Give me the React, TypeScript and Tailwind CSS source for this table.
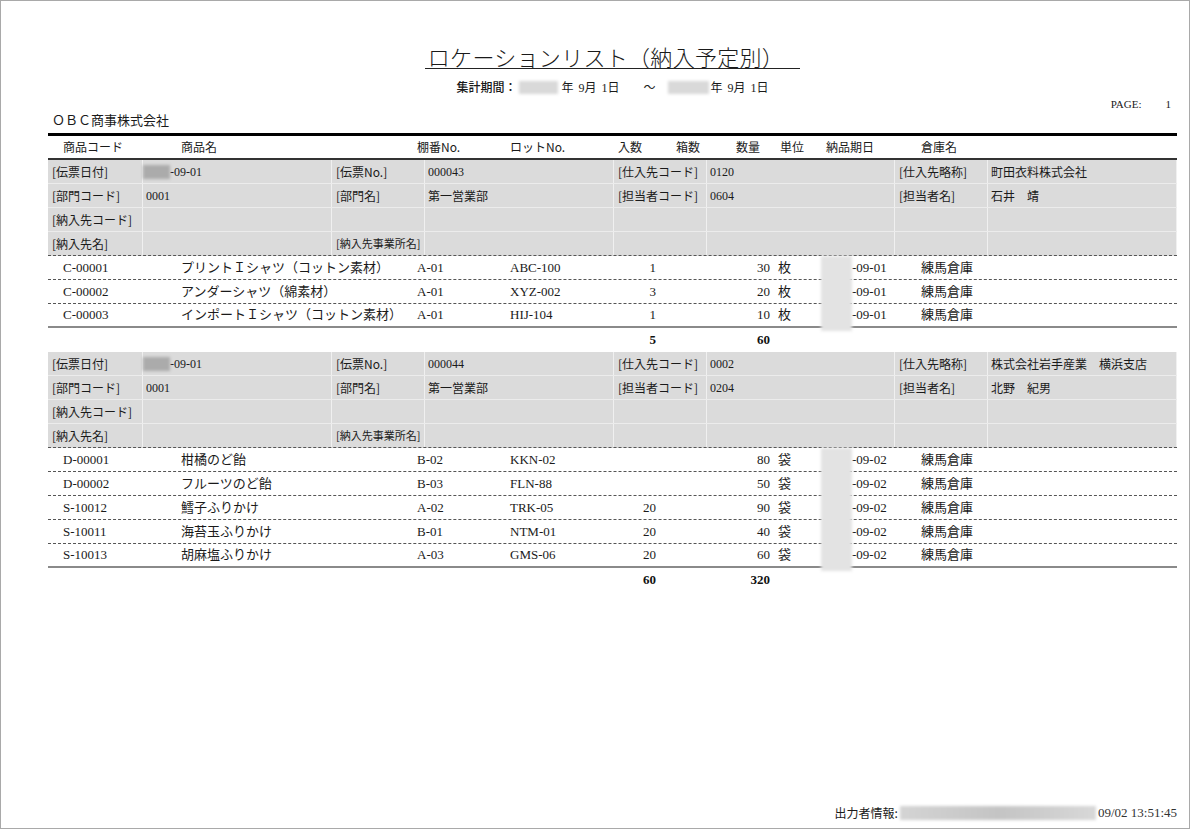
import React from 'react'

type Item = {
  code: string
  name: string
  shelf: string
  lot: string
  irisu: string
  qty: string
  unit: string
  due: string
  wh: string
}

type Slip = {
  no: string
  supplierCode: string
  supplierName: string
  deptCode: string
  deptName: string
  staffCode: string
  staffName: string
  items: Item[]
  totalIrisu: string
  totalQty: string
}

const slips: Slip[] = [
  {
    no: '000043',
    supplierCode: '0120',
    supplierName: '町田衣料株式会社',
    deptCode: '0001',
    deptName: '第一営業部',
    staffCode: '0604',
    staffName: '石井　靖',
    items: [
      { code: 'C-00001', name: 'プリントＩシャツ（コットン素材）', shelf: 'A-01', lot: 'ABC-100', irisu: '1', qty: '30', unit: '枚', due: '-09-01', wh: '練馬倉庫' },
      { code: 'C-00002', name: 'アンダーシャツ（綿素材）', shelf: 'A-01', lot: 'XYZ-002', irisu: '3', qty: '20', unit: '枚', due: '-09-01', wh: '練馬倉庫' },
      { code: 'C-00003', name: 'インポートＩシャツ（コットン素材）', shelf: 'A-01', lot: 'HIJ-104', irisu: '1', qty: '10', unit: '枚', due: '-09-01', wh: '練馬倉庫' },
    ],
    totalIrisu: '5',
    totalQty: '60',
  },
  {
    no: '000044',
    supplierCode: '0002',
    supplierName: '株式会社岩手産業　横浜支店',
    deptCode: '0001',
    deptName: '第一営業部',
    staffCode: '0204',
    staffName: '北野　紀男',
    items: [
      { code: 'D-00001', name: '柑橘のど飴', shelf: 'B-02', lot: 'KKN-02', irisu: '', qty: '80', unit: '袋', due: '-09-02', wh: '練馬倉庫' },
      { code: 'D-00002', name: 'フルーツのど飴', shelf: 'B-03', lot: 'FLN-88', irisu: '', qty: '50', unit: '袋', due: '-09-02', wh: '練馬倉庫' },
      { code: 'S-10012', name: '鱈子ふりかけ', shelf: 'A-02', lot: 'TRK-05', irisu: '20', qty: '90', unit: '袋', due: '-09-02', wh: '練馬倉庫' },
      { code: 'S-10011', name: '海苔玉ふりかけ', shelf: 'B-01', lot: 'NTM-01', irisu: '20', qty: '40', unit: '袋', due: '-09-02', wh: '練馬倉庫' },
      { code: 'S-10013', name: '胡麻塩ふりかけ', shelf: 'A-03', lot: 'GMS-06', irisu: '20', qty: '60', unit: '袋', due: '-09-02', wh: '練馬倉庫' },
    ],
    totalIrisu: '60',
    totalQty: '320',
  },
]

const serif = "font-['Liberation_Serif','Noto_Sans_CJK_JP',serif]"
const gothic = "font-['Noto_Sans_CJK_JP','Liberation_Sans',sans-serif]"
const rowGrid = 'grid grid-cols-[133px_236px_93px_104px_42px_60px_54px_51px_100px_1fr]'
const slipGrid = 'grid grid-cols-[95px_189px_93px_189px_93px_188px_93px_1fr]'

// ぼかし（マスク）部分
function Blur({ className }: { className: string }) {
  return <div className={`blur-[1.5px] ${className}`} />
}

function SlipHeader({ slip }: { slip: Slip }) {
  const cell = 'flex items-center border-r border-[#f0f0f0] h-full'
  const label = `${cell} pl-[4px] ${gothic} text-[12px]`
  const value = `${cell} pl-[3px] ${serif} text-[12px]`
  return (
    <div className="bg-[#dbdbdb] text-[#1a1a1a]">
      <div className={`${slipGrid} h-[24px] border-b border-[#ececec]`}>
        <div className={label}>[伝票日付]</div>
        <div className={`${cell}`}>
          <Blur className="w-[27px] h-[14px] bg-[#ababab]" />
          <span className={`${serif} text-[12px]`}>-09-01</span>
        </div>
        <div className={label}>[伝票No.]</div>
        <div className={value}>{slip.no}</div>
        <div className={label}>[仕入先コード]</div>
        <div className={`${value} pl-[2px]`}>{slip.supplierCode}</div>
        <div className={label}>[仕入先略称]</div>
        <div className={`${value} ${gothic}`}>{slip.supplierName}</div>
      </div>
      <div className={`${slipGrid} h-[24px] border-b border-[#ececec]`}>
        <div className={label}>[部門コード]</div>
        <div className={value}>{slip.deptCode}</div>
        <div className={label}>[部門名]</div>
        <div className={`${value} ${gothic}`}>{slip.deptName}</div>
        <div className={label}>[担当者コード]</div>
        <div className={`${value} pl-[2px]`}>{slip.staffCode}</div>
        <div className={label}>[担当者名]</div>
        <div className={`${value} ${gothic}`}>{slip.staffName}</div>
      </div>
      <div className={`${slipGrid} h-[24px] border-b border-[#ececec]`}>
        <div className={`${label} whitespace-nowrap`}>[納入先コード]</div>
        <div className={cell} />
        <div className={cell} />
        <div className={cell} />
        <div className={cell} />
        <div className={cell} />
        <div className={cell} />
        <div className={cell} />
      </div>
      <div className={`${slipGrid} h-[24px] border-b border-dashed border-b-[#555]`}>
        <div className={label}>[納入先名]</div>
        <div className={cell} />
        <div className={`${cell} pl-[4px] ${gothic} text-[11px] whitespace-nowrap`}>[納入先事業所名]</div>
        <div className={cell} />
        <div className={cell} />
        <div className={cell} />
        <div className={cell} />
        <div className={cell} />
      </div>
    </div>
  )
}

function SlipItems({ slip }: { slip: Slip }) {
  return (
    <div>
      <div className="relative">
        {slip.items.map((it, i) => {
          const last = i === slip.items.length - 1
          return (
            <div
              key={it.code}
              className={`${rowGrid} h-[24px] items-center text-[13px] text-[#1a1a1a] ${serif} ${
                last ? 'border-b-2 border-[#8a8a8a]' : 'border-b border-dashed border-[#555]'
              }`}
            >
              <div className="pl-[15px]">{it.code}</div>
              <div className="whitespace-nowrap">{it.name}</div>
              <div>{it.shelf}</div>
              <div>{it.lot}</div>
              <div className="text-right">{it.irisu}</div>
              <div />
              <div className="text-right">{it.qty}</div>
              <div className="pl-[8px]">{it.unit}</div>
              <div className="pl-[31px]">{it.due}</div>
              <div>{it.wh}</div>
            </div>
          )
        })}
        {/* 納品期日の年はマスク */}
        <Blur className="absolute left-[773px] top-0 bottom-[-3px] w-[31px] bg-[#e3e3e3]" />
      </div>
      <div className={`${rowGrid} h-[24px] items-center text-[13px] font-bold text-[#111] ${serif}`}>
        <div />
        <div />
        <div />
        <div />
        <div className="text-right">{slip.totalIrisu}</div>
        <div />
        <div className="text-right">{slip.totalQty}</div>
      </div>
    </div>
  )
}

function PeriodDate() {
  return (
    <span className="flex items-center">
      <span>年</span>
      <span className="ml-[5px]"><span className={serif}>9</span>月</span>
      <span className="ml-[5px]"><span className={serif}>1</span>日</span>
    </span>
  )
}

export default function App() {
  return (
    <div className="w-[1190px] h-[829px] bg-white border border-[#a9a9a9] flex flex-col pl-[47px] pr-[12px] text-[#1a1a1a]">
      {/* タイトル */}
      <div className="pt-[43px] flex justify-center">
        <span className={`inline-block pl-[3px] pr-[16px] border-b border-[#222] text-[22px] leading-[24px] tracking-[0.3px] ${gothic} font-light`}>
          ロケーションリスト（納入予定別）
        </span>
      </div>
      <div className={`mt-[10px] flex justify-center items-center h-[16px] text-[12px] ${gothic}`}>
        <span className="font-medium">集計期間：</span>
        <Blur className="ml-[3px] w-[39px] h-[13px] bg-[#d9d9d9]" />
        <span className="ml-[3px]"><PeriodDate /></span>
        <span className="ml-[24px]">～</span>
        <Blur className="ml-[12px] w-[41px] h-[13px] bg-[#d9d9d9]" />
        <span className="ml-[2px]"><PeriodDate /></span>
      </div>
      <div className={`mt-[2px] h-[14px] flex justify-end items-center text-[11px] pr-[6px] ${serif}`}>
        <span>PAGE:</span>
        <span className="ml-[24px]">1</span>
      </div>
      <div className={`h-[18px] flex items-center pl-[4px] text-[13px] ${gothic}`}>ＯＢＣ商事株式会社</div>

      {/* 明細表 */}
      <div className="mt-[4px] border-t-[3px] border-black">
        <div className={`${rowGrid} h-[24px] items-center border-b-2 border-[#333] text-[12px] ${gothic}`}>
          <div className="pl-[15px]">商品コード</div>
          <div>商品名</div>
          <div>棚番No.</div>
          <div>ロットNo.</div>
          <div className="pl-[4px]">入数</div>
          <div className="pl-[20px]">箱数</div>
          <div className="pl-[20px]">数量</div>
          <div className="pl-[10px]">単位</div>
          <div className="pl-[5px]">納品期日</div>
          <div>倉庫名</div>
        </div>
        {slips.map((s) => (
          <div key={s.no}>
            <SlipHeader slip={s} />
            <SlipItems slip={s} />
          </div>
        ))}
      </div>

      {/* 出力者情報 */}
      <div className="mt-auto mb-[7px] flex justify-end items-center h-[16px]">
        <span className={`text-[12px] ${gothic}`}>出力者情報:</span>
        <div className="ml-[2px] w-[196px] h-[14px] bg-gradient-to-r from-[#d4d4d4] via-[#c4c4c4] to-[#d8d8d8] blur-[1.5px]" />
        <span className={`ml-[2px] text-[13px] text-[#333] ${serif}`}>09/02 13:51:45</span>
      </div>
    </div>
  )
}
